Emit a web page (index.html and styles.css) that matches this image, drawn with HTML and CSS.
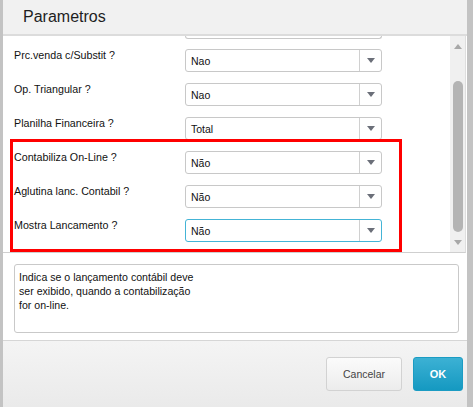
FILE: index.html
```html
<!DOCTYPE html>
<html lang="pt">
<head>
  <meta charset="UTF-8">
  <title>Parametros</title>
  <link rel="stylesheet" href="styles.css">
</head>
<body>
  <div class="dialog">
    <div class="header">Parametros</div>

    <div class="panel">
      <div class="list">
        <div class="stub"></div>

        <div class="row">
          <div class="label">Prc.venda c/Substit ?</div>
          <div class="select"><span class="value">Nao</span><span class="arrow"></span></div>
        </div>
        <div class="row">
          <div class="label">Op. Triangular ?</div>
          <div class="select"><span class="value">Nao</span><span class="arrow"></span></div>
        </div>
        <div class="row">
          <div class="label">Planilha Financeira ?</div>
          <div class="select"><span class="value">Total</span><span class="arrow"></span></div>
        </div>
        <div class="row">
          <div class="label">Contabiliza On-Line ?</div>
          <div class="select"><span class="value">Não</span><span class="arrow"></span></div>
        </div>
        <div class="row">
          <div class="label">Aglutina lanc. Contabil ?</div>
          <div class="select"><span class="value">Não</span><span class="arrow"></span></div>
        </div>
        <div class="row">
          <div class="label">Mostra Lancamento ?</div>
          <div class="select focused"><span class="value">Não</span><span class="arrow"></span></div>
        </div>
      </div>

      <div class="scrollbar">
        <span class="sb-up"></span>
        <span class="sb-thumb"></span>
        <span class="sb-down"></span>
      </div>
    </div>

    <div class="help">
      Indica se o lançamento contábil deve<br>
      ser exibido, quando a contabilização<br>
      for on-line.
    </div>

    <div class="footer">
      <button class="btn cancel">Cancelar</button>
      <button class="btn ok">OK</button>
    </div>
  </div>

  <!-- red highlight over the last three rows -->
  <div class="highlight"></div>
</body>
</html>
```

FILE: styles.css
```css
* {
  margin: 0;
  padding: 0;
  box-sizing: border-box;
}

body {
  width: 473px;
  height: 407px;
  background: #c3c3c3;
  font-family: 'Liberation Sans', Arial, sans-serif;
  font-size: 11px;
  color: #111;
  position: relative;
  overflow: hidden;
}

.dialog {
  margin-left: 3px;
  width: 464px;
  height: 407px;
  background: #fff;
  display: flex;
  flex-direction: column;
}

.header {
  height: 36px;
  padding-left: 20px;
  background: #f1f1f1;
  border-bottom: 2px solid #dcdcdc;
  font-size: 16px;
  line-height: 34px;
  color: #1e1e1e;
}

/* scrolling list of parameters */
.panel {
  width: 463px;
  height: 217px;
  display: flex;
  border-right: 1px solid #dedede;
  border-bottom: 1px solid #cfcfcf;
}

.list {
  flex: 1;
  display: flex;
  flex-direction: column;
  gap: 11px;
  overflow: hidden;
}

.stub {
  margin-left: 182px;
  width: 197px;
  height: 3px;
  border: 1px solid #c8c8c8;
  border-top: none;
  border-radius: 0 0 3px 3px;
  margin-bottom: -1px;
}

.row {
  display: flex;
  align-items: flex-start;
}

.label {
  width: 182px;
  padding-left: 11px;
  line-height: 13px;
  font-size: 10.7px;
}

.select {
  width: 197px;
  height: 23px;
  display: flex;
  border: 1px solid #c8c8c8;
  border-radius: 3px;
  background: #fff;
}

.select.focused {
  border-color: #44b4d6;
}

.value {
  flex: 1;
  padding-left: 5px;
  line-height: 22px;
  font-size: 10.5px;
}

.arrow {
  width: 22px;
  border-left: 1px solid #d0d0d0;
  display: flex;
  align-items: center;
  justify-content: center;
}

.arrow::after {
  content: '';
  border-left: 4px solid transparent;
  border-right: 4px solid transparent;
  border-top: 5px solid #6b6f79;
}

.scrollbar {
  width: 15px;
  background: #f0f0f0;
  display: flex;
  flex-direction: column;
  align-items: center;
  padding-top: 8px;
}

.sb-up,
.sb-down {
  width: 0;
  height: 0;
  border-left: 4px solid transparent;
  border-right: 4px solid transparent;
}

.sb-up {
  border-bottom: 5px solid #a8a8a8;
}

.sb-down {
  border-top: 5px solid #a8a8a8;
  margin-top: 8px;
}

.sb-thumb {
  margin-top: 32px;
  width: 10px;
  height: 151px;
  border-radius: 5px;
  background: #b4b4b4;
}

/* description */
.help {
  margin: 11px 0 7px 11px;
  width: 445px;
  height: 69px;
  padding: 5px 4px;
  border: 1px solid #c9c9c9;
  border-radius: 3px;
  font-size: 10.6px;
  line-height: 14px;
  color: #111;
}

.footer {
  flex: 1;
  border-top: 1px solid #d6d6d6;
  background: linear-gradient(#f4f4f4, #eaeaea);
  display: flex;
  justify-content: flex-end;
  align-items: flex-start;
  gap: 11px;
  padding: 16px 4px 0 0;
}

.btn {
  height: 34px;
  border-radius: 3px;
  font-family: 'Liberation Sans', Arial, sans-serif;
  font-size: 11px;
}

.cancel {
  width: 76px;
  border: 1px solid #d2d2d2;
  background: linear-gradient(#fbfbfb, #ececec);
  color: #444;
  font-size: 10.5px;
}

.ok {
  width: 50px;
  border: 1px solid #1b9cc3;
  background: linear-gradient(#3cb1d4, #1599c1);
  color: #fff;
  font-weight: bold;
}

.highlight {
  position: absolute;
  left: 10px;
  top: 139px;
  width: 392px;
  height: 113px;
  border: 3px solid #ff0000;
}
```
